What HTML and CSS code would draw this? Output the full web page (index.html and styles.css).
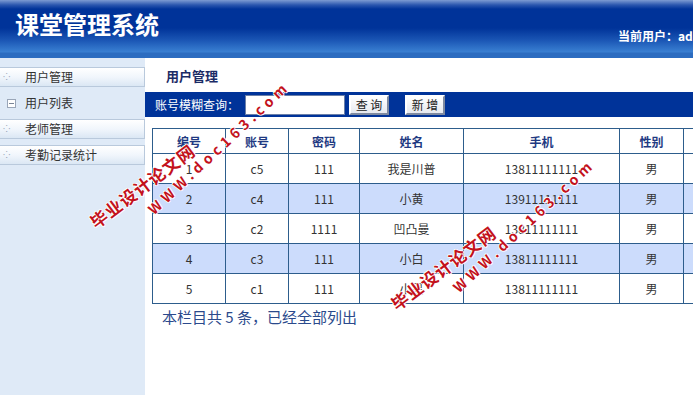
FILE: index.html
```html
<!DOCTYPE html>
<html lang="zh">
<head>
<meta charset="utf-8">
<title>课堂管理系统</title>
<link rel="stylesheet" href="styles.css">
</head>
<body>
<div class="page">
  <header class="top">
    <h1 class="brand">课堂管理系统</h1>
    <div class="user">当前用户：admin</div>
  </header>
  <div class="body">
    <aside class="side">
      <div class="item box"><span class="dots">⁘</span>用户管理</div>
      <div class="item plain"><span class="minus"></span>用户列表</div>
      <div class="item box"><span class="dots">⁘</span>老师管理</div>
      <div class="item box"><span class="dots">⁘</span>考勤记录统计</div>
    </aside>
    <main class="main">
      <h2 class="title">用户管理</h2>
      <div class="search">
        <span class="label">账号模糊查询：</span>
        <input class="field" type="text">
        <button class="btn">查 询</button>
        <button class="btn add">新 增</button>
      </div>
      <table class="grid">
        <colgroup>
          <col style="width:73px"><col style="width:63px"><col style="width:71px"><col style="width:104px"><col style="width:156px"><col style="width:64px"><col style="width:90px">
        </colgroup>
        <thead>
          <tr><th>编号</th><th>账号</th><th>密码</th><th>姓名</th><th>手机</th><th>性别</th><th>操作</th></tr>
        </thead>
        <tbody>
          <tr><td>1</td><td>c5</td><td>111</td><td>我是川普</td><td>13811111111</td><td>男</td><td></td></tr>
          <tr class="alt"><td>2</td><td>c4</td><td>111</td><td>小黄</td><td>13911111111</td><td>男</td><td></td></tr>
          <tr><td>3</td><td>c2</td><td>1111</td><td>凹凸曼</td><td>13811111111</td><td>男</td><td></td></tr>
          <tr class="alt"><td>4</td><td>c3</td><td>111</td><td>小白</td><td>13811111111</td><td>男</td><td></td></tr>
          <tr><td>5</td><td>c1</td><td>111</td><td>小黑</td><td>13811111111</td><td>男</td><td></td></tr>
        </tbody>
      </table>
      <p class="note">本栏目共 5 条，已经全部列出</p>
    </main>
  </div>
  <span class="wm cn cn1">毕业设计论文网</span>
  <span class="wm en en1">WWW.doc163.com</span>
  <span class="wm cn cn2">毕业设计论文网</span>
  <span class="wm en en2">WWW.doc163.com</span>
</div>
</body>
</html>
```
FILE: styles.css
```css
html, body {
  margin: 0;
  padding: 0;
  height: 100%;
  overflow: hidden;
  font-family: "Noto Sans CJK SC", "Noto Sans", sans-serif;
}
.page {
  position: relative;
  width: 693px;
  height: 395px;
  overflow: hidden;
  display: flex;
  flex-direction: column;
}
.top {
  height: 58px;
  flex: none;
  position: relative;
  background: linear-gradient(to bottom, #7d9bd2 0px, #2a56ae 5px, #003399 9px, #003399 28px, #1a55b4 40px, #3a80d2 52px, #2c6cc0 53px, #2c6cc0 58px);
}
.brand {
  margin: 0;
  position: absolute;
  left: 15px;
  top: 9px;
  font-size: 24px;
  line-height: 30px;
  font-weight: bold;
  color: #fff;
}
.user {
  position: absolute;
  left: 618px;
  top: 27px;
  font-size: 12px;
  line-height: 18px;
  font-weight: bold;
  color: #fff;
  white-space: nowrap;
}
.body {
  flex: 1;
  display: flex;
}
.side {
  width: 145px;
  flex: none;
  background: #dfeaf7;
  padding-top: 9px;
  display: flex;
  flex-direction: column;
  gap: 6px;
}
.item {
  height: 20px;
  box-sizing: border-box;
  font-size: 12px;
  line-height: 18px;
  color: #333;
  padding-left: 25px;
  position: relative;
}
.box {
  border: 1px solid #b9c9dc;
  border-left: none;
  background: linear-gradient(to bottom, #ffffff 0%, #f1f6fc 50%, #dbe7f4 100%);
}
.plain {
  line-height: 20px;
}
.dots {
  position: absolute;
  left: 3px;
  top: 0;
  font-size: 9px;
  color: #8f9db2;
}
.minus {
  position: absolute;
  left: 7px;
  top: 6px;
  width: 7px;
  height: 7px;
  border: 1px solid #9aa6b8;
  background: #fff;
}
.minus::after {
  content: "";
  position: absolute;
  left: 1px;
  top: 3px;
  width: 5px;
  height: 1px;
  background: #7a8698;
}
.main {
  flex: 1;
  background: #fff;
  min-width: 0;
}
.title {
  margin: 0;
  height: 34px;
  box-sizing: border-box;
  padding: 9px 0 0 21px;
  font-size: 13px;
  line-height: 18px;
  font-weight: bold;
  color: #1b2b66;
}
.search {
  height: 25px;
  background: #003399;
  display: flex;
  align-items: center;
  padding-left: 10px;
}
.label {
  color: #fff;
  font-size: 12px;
  width: 90px;
}
.field {
  width: 100px;
  height: 20px;
  box-sizing: border-box;
  border: 1px solid #6b7fa8;
  padding: 0;
  margin: 0 4px 0 0;
  background: #fff;
}
.btn {
  width: 40px;
  height: 20px;
  box-sizing: border-box;
  padding: 0;
  margin: 0;
  font-family: "Noto Sans CJK SC", sans-serif;
  font-size: 12px;
  line-height: 16px;
  color: #222;
  background: linear-gradient(to bottom, #ffffff, #e6e9ef);
  border: 2px solid;
  border-color: #ffffff #7f8aa0 #7f8aa0 #ffffff;
}
.add {
  margin-left: 16px;
}
.grid {
  margin: 11px 0 0 7px;
  border-collapse: collapse;
  table-layout: fixed;
  width: 621px;
}
.grid th, .grid td {
  border: 1px solid #2d5d8c;
  text-align: center;
  padding: 0;
  font-size: 12px;
}
.grid th {
  height: 24px;
  color: #1f3a82;
  font-weight: bold;
}
.grid td {
  height: 29px;
  color: #333;
}
.grid tr.alt td {
  background: #ccdcfc;
}
.note {
  margin: 3px 0 0 17px;
  font-size: 15px;
  line-height: 20px;
  color: #2b4a8c;
}
.wm {
  position: absolute;
  transform-origin: left center;
  color: #c3121c;
  font-weight: bold;
  text-shadow: 1px 0 0 #fff, -1px 0 0 #fff, 0 1px 0 #fff, 0 -1px 0 #fff;
  white-space: nowrap;
  pointer-events: none;
}
.cn {
  font-size: 17px;
  line-height: 20px;
  letter-spacing: 1px;
  transform: rotate(-37deg);
}
.en {
  font-size: 14px;
  line-height: 18px;
  letter-spacing: 4.4px;
  transform: rotate(-43deg);
}
.cn1 {
  left: 92px;
  top: 214px;
}
.en1 {
  left: 150px;
  top: 202px;
}
.cn2 {
  left: 393px;
  top: 296px;
}
.en2 {
  left: 455px;
  top: 280px;
}
```
